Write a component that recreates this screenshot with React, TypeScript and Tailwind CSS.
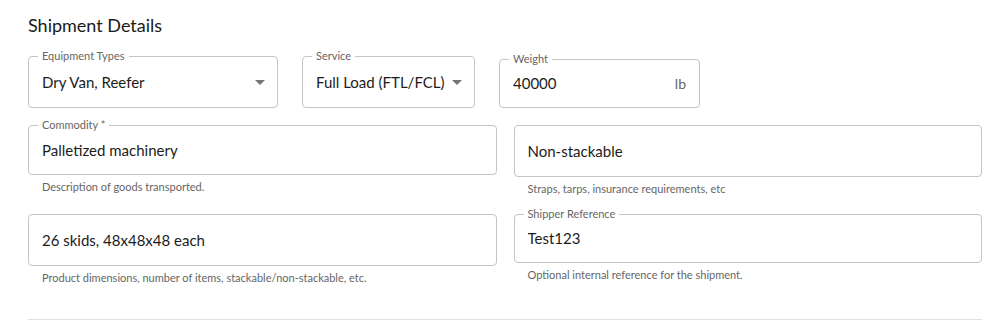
import React from "react"

const font = { fontFamily: "Lato, 'Noto Sans', sans-serif" }

const Arrow = () => (
  <svg width="10" height="5" viewBox="0 0 10 5" className="shrink-0">
    <path d="M0 0 L10 0 L5 5 Z" fill="#757575" />
  </svg>
)

type FieldProps = {
  label?: string
  value: string
  width?: string
  height?: string
  select?: boolean
  suffix?: string
  helper?: string
}

const Field = ({ label, value, width, height = "h-[52px]", select, suffix, helper }: FieldProps) => {
  return (
    <div className={`flex flex-col ${width ?? ""}`}>
      <div
        className={`relative flex items-center ${height} rounded-[4px] border border-[#c4c4c4] pl-[13px] pr-[12px]`}
      >
        {label && (
          <span className="absolute -top-[8px] left-[9px] bg-white px-[4px] text-[11px] leading-[14px] text-[#666666]">
            {label}
          </span>
        )}
        <span className="flex-1 truncate text-[15px] text-[#1c1c1c]">{value}</span>
        {select && <Arrow />}
        {suffix && <span className="pr-[1px] text-[14px] text-[#666666]">{suffix}</span>}
      </div>
      {helper && (
        <div className="mt-[5px] pl-[14px] text-[11px] leading-[14px] text-[#666666]">{helper}</div>
      )}
    </div>
  )
}

export default function App() {
  return (
    <div className="h-[327px] w-[1008px] bg-white" style={font}>
      <div className="w-[982px] pl-[28px] pt-[13px]">
        <h2 className="text-[18px] leading-[24px] text-[#1a1a1a]">Shipment Details</h2>
        <div className="mt-[19px] flex items-start gap-[24px]">
          <Field label="Equipment Types" value="Dry Van, Reefer" width="w-[250px]" select />
          <Field label="Service" value="Full Load (FTL/FCL)" width="w-[173px]" select />
          <div className="pt-[3px]">
            <Field label="Weight" value="40000" width="w-[201px]" height="h-[49px]" suffix="lb" />
          </div>
        </div>
        <div className="mt-[17px] grid grid-cols-2 items-start gap-x-[17px]">
          <Field
            label="Commodity *"
            value="Palletized machinery"
            height="h-[50px]"
            helper="Description of goods transported."
          />
          <div>
            <Field value="Non-stackable" helper="Straps, tarps, insurance requirements, etc" />
          </div>
        </div>
        <div className="mt-[18px] grid grid-cols-2 items-start gap-x-[17px]">
          <Field
            value="26 skids, 48x48x48 each"
            helper="Product dimensions, number of items, stackable/non-stackable, etc."
          />
          <Field
            label="Shipper Reference"
            value="Test123"
            height="h-[49px]"
            helper="Optional internal reference for the shipment."
          />
        </div>
        <div className="mt-[34px] h-px w-full bg-[#e0e0e0]" />
      </div>
    </div>
  )
}
